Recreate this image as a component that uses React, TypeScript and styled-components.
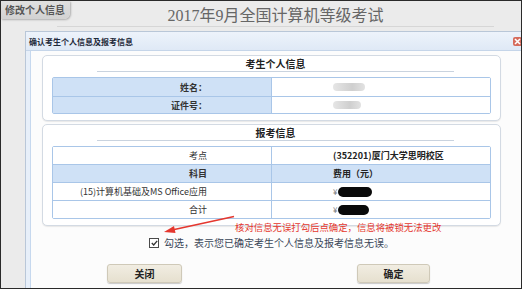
import React from 'react'
import styled, { createGlobalStyle } from 'styled-components'

const GlobalStyle = createGlobalStyle`
  body {
    margin: 0;
    font-family: "Liberation Sans", "Noto Sans CJK SC", sans-serif;
  }
`

const Page = styled.div`
  position: relative;
  width: 522px;
  height: 289px;
  box-sizing: border-box;
  border: 1px solid #2a2a2a;
  background: #ebebeb;
  overflow: hidden;
`

const EditTab = styled.div`
  position: absolute;
  top: 0;
  left: 0;
  width: 69px;
  height: 18px;
  box-sizing: border-box;
  padding: 3px 0 0 4px;
  background: linear-gradient(#e0e0e0, #d2d2d2);
  border-radius: 0 0 6px 0;
  box-shadow: 1px 1px 2px rgba(0, 0, 0, 0.25);
  font-size: 10px;
  font-weight: 700;
  color: #555;
  font-family: "Noto Sans CJK SC", sans-serif;
  line-height: 12px;
`

const TitleBar = styled.div`
  margin: 0 27px 0 56px;
  padding-top: 6px;
  height: 19px;
  border-bottom: 1px solid #d6d6d6;
  text-align: center;
  font-family: "Liberation Serif", "Noto Sans CJK SC", serif;
  font-size: 16px;
  line-height: 18px;
  color: #666;
`

const Dialog = styled.div`
  margin: 4px 0 0 24px;
  width: 500px;
  height: 262px;
  border: 1px solid #b9c7d8;
  background: #fbfcfe;
  display: flex;
  flex-direction: column;
`

const DialogHeader = styled.div`
  display: flex;
  align-items: center;
  justify-content: space-between;
  height: 18px;
  padding: 0 3px 0 3px;
  background: linear-gradient(#edf3fb, #dfe9f6);
  border-bottom: 1px solid #c5d5e9;
  font-family: "Noto Sans CJK SC", sans-serif;
  font-size: 8px;
  font-weight: 700;
  color: #1e2a3a;
`

const CloseIcon = styled.span`
  width: 9px;
  height: 9px;
  border-radius: 2px;
  background: #d66b5c;
  display: flex;
  align-items: center;
  justify-content: center;
  margin-right: 1px;
`

const DialogBody = styled.div`
  flex: 1;
  display: flex;
  background: #e7eff9;
  padding-left: 4px;
`

const Content = styled.div`
  position: relative;
  flex: 1;
  background: #fcfcfc;
  border-left: 1px solid #c6d8ee;
  padding: 4px 0 0 11px;
  display: flex;
  flex-direction: column;
`

const Card = styled.div<{ $gap?: number }>`
  width: 459px;
  box-sizing: border-box;
  margin-top: ${p => p.$gap ?? 0}px;
  border: 1px solid #d3dae3;
  border-radius: 5px;
  background: #fff;
  box-shadow: 0 1px 1px rgba(0, 0, 0, 0.08);
  padding: 0 9px 6px 9px;
`

const CardTitle = styled.div`
  margin: 0 37px 0 45px;
  padding-top: 2px;
  height: 13px;
  border-bottom: 1px solid #c9d3df;
  text-align: center;
  font-family: "Noto Sans CJK SC", sans-serif;
  font-size: 10px;
  font-weight: 700;
  line-height: 12px;
  color: #222;
  margin-bottom: 5px;
`

const Table = styled.div`
  border: 1px solid #a9c6e8;
  border-radius: 2px;
`

const Row = styled.div<{ $head?: boolean; $h?: number }>`
  display: grid;
  grid-template-columns: 219px 1fr;
  height: ${p => p.$h ?? 17}px;
  background: ${p => (p.$head ? '#cfe1f6' : '#fff')};
  & + & {
    border-top: 1px solid #a9c6e8;
  }
`

const Label = styled.div<{ $tint?: boolean; $bold?: boolean }>`
  display: flex;
  align-items: center;
  justify-content: flex-end;
  padding-right: 64px;
  background: ${p => (p.$tint ? '#cfe1f6' : 'transparent')};
  border-right: 1px solid #a9c6e8;
  font-family: "Noto Sans CJK SC", sans-serif;
  font-size: 9px;
  font-weight: ${p => (p.$bold ? 700 : 400)};
  color: #333;
`

const Value = styled.div<{ $bold?: boolean }>`
  display: flex;
  align-items: center;
  padding-left: 61px;
  font-family: "Noto Sans CJK SC", sans-serif;
  font-size: 9px;
  font-weight: ${p => (p.$bold ? 700 : 400)};
  color: #222;
  gap: 1px;
`

const Blur = styled.span<{ $w: number; $dark?: boolean }>`
  display: inline-block;
  width: ${p => p.$w}px;
  height: ${p => (p.$dark ? 10 : 8)}px;
  border-radius: 5px;
  background: ${p => (p.$dark ? '#0a0a0a' : 'linear-gradient(90deg, #e6e6e6, #cfcfcf 60%, #e2e2e2)')};
`

const Yen = styled.span`
  color: #777;
  font-size: 8px;
`

const CheckRow = styled.label`
  display: flex;
  align-items: center;
  justify-content: center;
  gap: 5px;
  margin-top: 9px;
  width: 459px;
  font-family: "Noto Sans CJK SC", sans-serif;
  font-size: 10px;
  color: #3a4658;
`

const CheckBox = styled.span`
  width: 8px;
  height: 8px;
  border: 1px solid #4a4a4a;
  background: #fff;
  display: flex;
  align-items: center;
  justify-content: center;
`

const ButtonRow = styled.div`
  display: flex;
  gap: 175px;
  justify-content: center;
  width: 459px;
  margin-top: 14px;
  padding-right: 6px;
  box-sizing: border-box;
`

const Button = styled.button<{ $w: number }>`
  width: ${p => p.$w}px;
  height: 19px;
  padding: 0;
  border: 1px solid #cfc9b8;
  border-radius: 3px;
  background: linear-gradient(#f1ede2, #e6e0cf);
  box-shadow: 0 1px 1px rgba(0, 0, 0, 0.2);
  font-family: "Noto Sans CJK SC", sans-serif;
  font-size: 10px;
  font-weight: 700;
  color: #222;
`

const Note = styled.div`
  position: absolute;
  left: 204px;
  top: 171px;
  font-family: "Noto Sans CJK SC", sans-serif;
  font-size: 9.4px;
  line-height: 11px;
  color: #e5372e;
  white-space: nowrap;
`

const Arrow = styled.svg`
  position: absolute;
  left: 132px;
  top: 164px;
`

export default function App() {
  return (
    <Page>
      <GlobalStyle />
      <EditTab>修改个人信息</EditTab>
      <TitleBar>2017年9月全国计算机等级考试</TitleBar>
      <Dialog>
        <DialogHeader>
          <span>确认考生个人信息及报考信息</span>
          <CloseIcon>
            <svg width="7" height="7" viewBox="0 0 7 7">
              <path d="M1 1L6 6M6 1L1 6" stroke="#fff" strokeWidth="1.6" />
            </svg>
          </CloseIcon>
        </DialogHeader>
        <DialogBody>
          <Content>
            <Card>
              <CardTitle>考生个人信息</CardTitle>
              <Table>
                <Row $h={18}>
                  <Label $tint $bold>姓名：</Label>
                  <Value><Blur $w={32} /></Value>
                </Row>
                <Row $h={16}>
                  <Label $tint $bold>证件号：</Label>
                  <Value><Blur $w={28} /></Value>
                </Row>
              </Table>
            </Card>
            <Card $gap={3}>
              <CardTitle>报考信息</CardTitle>
              <Table>
                <Row>
                  <Label>考点</Label>
                  <Value $bold>(352201)厦门大学思明校区</Value>
                </Row>
                <Row $head>
                  <Label $bold>科目</Label>
                  <Value $bold>费用（元）</Value>
                </Row>
                <Row>
                  <Label>(15)计算机基础及MS Office应用</Label>
                  <Value><Yen>¥</Yen><Blur $w={34} $dark /></Value>
                </Row>
                <Row>
                  <Label>合计</Label>
                  <Value><Yen>¥</Yen><Blur $w={31} $dark /></Value>
                </Row>
              </Table>
            </Card>
            <CheckRow>
              <CheckBox>
                <svg width="7" height="6" viewBox="0 0 7 6">
                  <path d="M0.8 3L2.7 5L6.2 0.8" fill="none" stroke="#333" strokeWidth="1.3" />
                </svg>
              </CheckBox>
              勾选，表示您已确定考生个人信息及报考信息无误。
            </CheckRow>
            <ButtonRow>
              <Button $w={75}>关闭</Button>
              <Button $w={73}>确定</Button>
            </ButtonRow>
            <Arrow width="72" height="20" viewBox="0 0 72 20">
              <path d="M71 1.5L9 15" stroke="#e5372e" strokeWidth="1.6" />
              <path d="M1 17L11 11L12.5 18Z" fill="#e5372e" />
            </Arrow>
            <Note>核对信息无误打勾后点确定，信息将被锁无法更改</Note>
          </Content>
        </DialogBody>
      </Dialog>
    </Page>
  )
}
